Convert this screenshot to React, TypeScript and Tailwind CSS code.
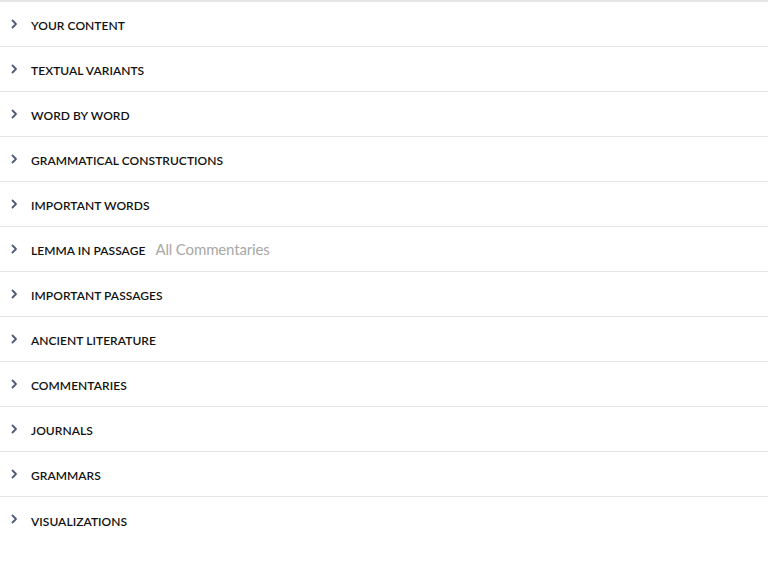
const sections = [
  "Your Content",
  "Textual Variants",
  "Word by Word",
  "Grammatical Constructions",
  "Important Words",
  "Lemma in Passage",
  "Important Passages",
  "Ancient Literature",
  "Commentaries",
  "Journals",
  "Grammars",
  "Visualizations",
];

function Chevron() {
  return (
    <svg
      width="8"
      height="10"
      viewBox="0 0 8 10"
      className="ml-[10px] mb-[1px] shrink-0 text-[#4f5a75]"
      fill="none"
      stroke="currentColor"
      strokeWidth="1.8"
      strokeLinecap="round"
      strokeLinejoin="round"
    >
      <path d="M2.5 1.5 L6 5 L2.5 8.5" />
    </svg>
  );
}

export default function App() {
  return (
    <div className="min-h-[563px] bg-white font-['Lato',sans-serif]">
      <div className="border-t-2 border-[#e6e6e6]">
        {sections.map((label, i) => (
          <div
            key={label}
            className={
              "flex h-[45px] items-center " +
              (i < sections.length - 1 ? "border-b border-[#e4e4e4]" : "")
            }
          >
            <Chevron />
            <span className="ml-[13px] pt-[4px] text-[12px] font-semibold uppercase tracking-[0.05px] text-[#111]">
              {label}
            </span>
            {label === "Lemma in Passage" && (
              <span className="ml-[10px] text-[15px] tracking-[-0.15px] text-[#a8a8a8]">
                All Commentaries
              </span>
            )}
          </div>
        ))}
      </div>
    </div>
  );
}
